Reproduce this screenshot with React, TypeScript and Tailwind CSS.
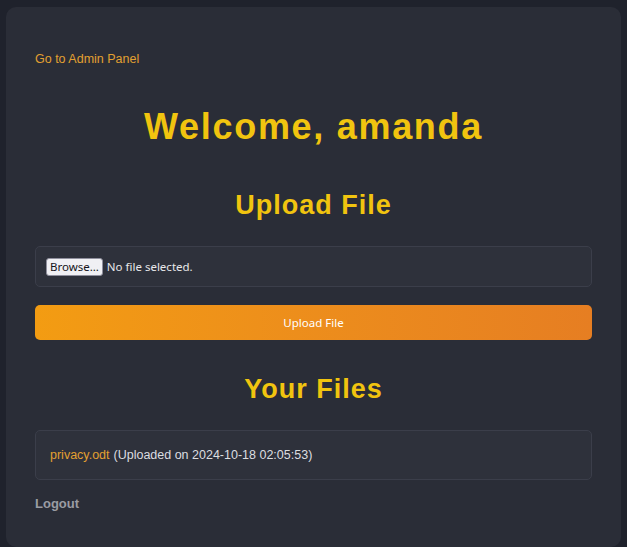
export default function App() {
  const files = [{ name: "privacy.odt", date: "2024-10-18 02:05:53" }]

  return (
    <div className="min-h-screen bg-[#1f222c] px-[6px] pt-[7px] pb-[6px] font-['Liberation_Sans',Arial,sans-serif]">
      <div className="rounded-[10px] bg-[#2a2d37] px-[29px] pt-[45px] pb-[35px]">
        <a href="#" className="block text-[12.5px] leading-[14px] text-[#e2a031]">
          Go to Admin Panel
        </a>

        <h1 className="mt-[41px] text-center text-[36px] leading-[40px] font-bold tracking-[1.7px] text-[#f1c40f]">
          Welcome, amanda
        </h1>

        <h2 className="mt-[42px] text-center text-[27px] leading-[32px] font-bold tracking-[1px] text-[#f1c40f]">
          Upload File
        </h2>

        <form className="flex flex-col">
          <div className="mt-[25px] flex h-[41px] items-center gap-[4px] rounded-[5px] border border-[#3b3e4a] bg-[#2e313b] px-[10px] font-['Noto_Sans',sans-serif] text-[11.5px]">
            <span className="flex h-[18px] items-center rounded-[3px] border border-[#8f8f9d] bg-[#f0f0f4] px-[3px] leading-none text-[#15141a]">
              Browse…
            </span>
            <span className="text-[#e8e8ea]">No file selected.</span>
          </div>
          <button
            type="button"
            className="mt-[18px] h-[35px] rounded-[5px] bg-gradient-to-r from-[#f39c12] to-[#e67e22] font-['Noto_Sans',sans-serif] text-[11.5px] text-white"
          >
            Upload File
          </button>
        </form>

        <h2 className="mt-[33px] text-center text-[27px] leading-[32px] font-bold tracking-[1px] text-[#f1c40f]">
          Your Files
        </h2>

        <ul className="mt-[25px]">
          {files.map((f) => (
            <li
              key={f.name}
              className="flex h-[50px] items-center rounded-[5px] border border-[#3b3e4a] bg-[#2e313b] px-[14px] text-[12.5px] text-[#dcdde0]"
            >
              <a href="#" className="text-[#e2a031]">{f.name}</a>
              <span className="ml-[4px]">(Uploaded on {f.date})</span>
            </li>
          ))}
        </ul>

        <a href="#" className="mt-[16px] block text-[13px] leading-[16px] font-bold text-[#9a9ca3]">
          Logout
        </a>
      </div>
    </div>
  )
}
